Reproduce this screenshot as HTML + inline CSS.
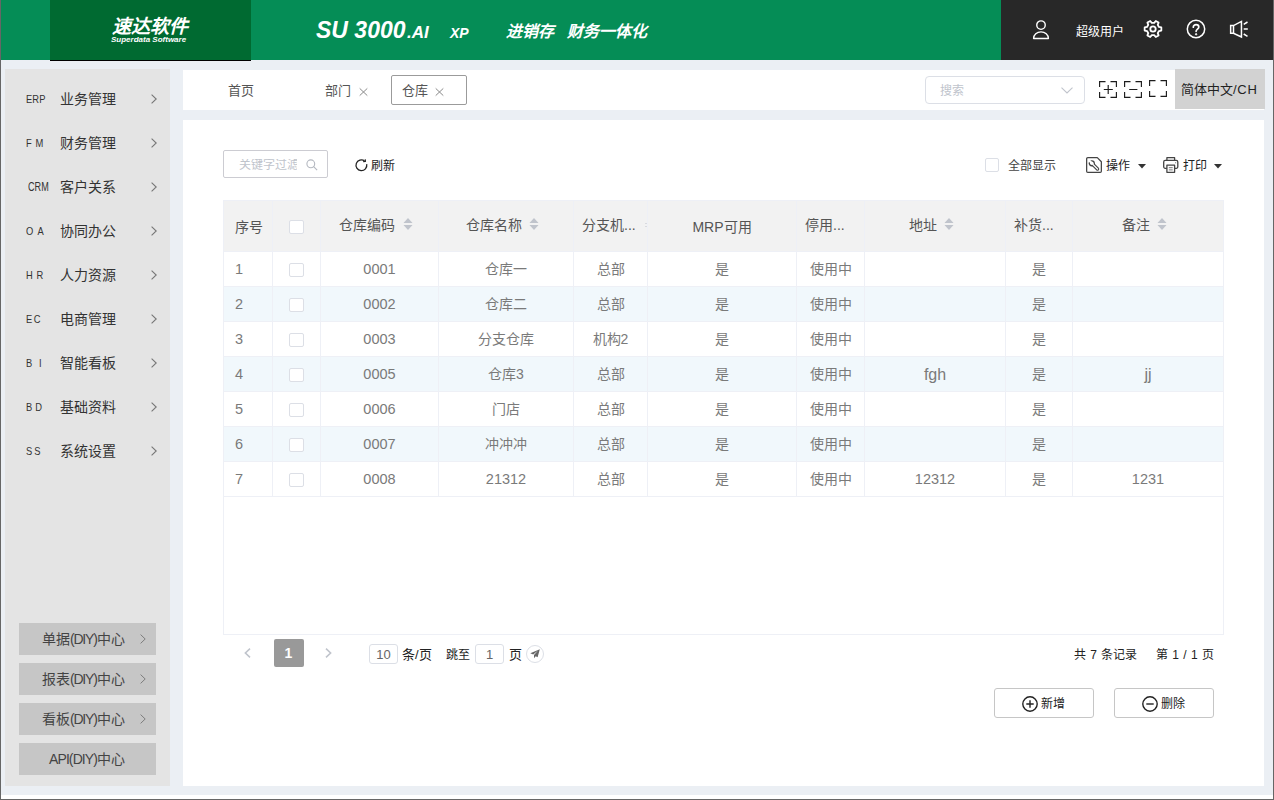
<!DOCTYPE html>
<html lang="zh-CN">
<head>
<meta charset="utf-8">
<title>SU 3000.AI</title>
<style>
*{box-sizing:border-box;margin:0;padding:0}
html,body{width:1274px;height:800px;overflow:hidden;background:#fff}
body{position:relative;font-family:"Liberation Sans",sans-serif;font-size:14px;color:#333}
.abs{position:absolute}
.t{position:absolute;white-space:nowrap;line-height:1}
svg{position:absolute;overflow:visible}
/* frame */
#bg{left:1px;top:0;width:1272px;height:795px;background:#ebeff4}
#edgeL{left:0;top:0;width:1px;height:800px;background:#666}
#edgeR{left:1273px;top:0;width:1px;height:800px;background:#666}
#edgeB{left:0;top:799px;width:1274px;height:1px;background:#666}
/* header */
#hdr{left:1px;top:0;width:1000px;height:60px;background:#058d56}
#logo{left:50px;top:0;width:201px;height:61px;background:#006a31;border-bottom:1px solid #000}
#userbar{left:1001px;top:0;width:272px;height:60px;background:#282828}
.hw{color:#fff;font-weight:bold;font-style:italic}
/* sidebar */
#side{left:5px;top:69px;width:165px;height:717px;background:#e4e4e4}
.mi{position:absolute;left:0;width:165px;height:44px}
.mi .k{position:absolute;left:21px;top:16px;transform-origin:0 0;transform:scaleX(.85);font-size:11px;line-height:12px;color:#333;white-space:nowrap}
.mi .n{position:absolute;left:54.500px;top:14px;font-size:14px;line-height:16px;color:#333;white-space:nowrap}
.mi svg{left:146px;top:17px}
.diy{position:absolute;left:14px;width:137px;height:32px;background:#c6c6c6;color:#444;font-size:14px;line-height:32px;white-space:nowrap}
.lt{font-style:normal;letter-spacing:-1.200px}
.diy span{position:absolute;left:0;top:0;height:32px}
/* tabs */
#tabs{left:183px;top:70px;width:1081px;height:40px;background:#fff}
#panel{left:183px;top:120px;width:1081px;height:666px;background:#fff}
/* table */
#tbl{left:223px;top:200px;width:1001px;height:435px;border:1px solid #eef0f6;background:#fff}
#thead{left:0;top:0;width:998px;height:50px;background:#f2f2f2}
.row{position:absolute;left:0;width:998px;height:35px;border-top:1px solid #eef0f6}
.row.alt{background:#f1f8fc}
.vl{position:absolute;top:0;width:1px;height:296px;background:#eef0f6}
.c{position:absolute;top:0;height:35px;line-height:35px;text-align:center;font-size:14px;color:#7a7a7a;white-space:nowrap;overflow:hidden}
.h{position:absolute;top:-1px;height:50px;line-height:50px;text-align:center;font-size:14px;color:#555;white-space:nowrap;overflow:hidden}
.c.n{font-size:14.500px}
.cb{position:absolute;width:14.500px;height:14px;border:1px solid #dcdfe6;border-radius:2px;background:#fff}
</style>
</head>
<body>
<div id="bg" class="abs"></div>
<div id="hdr" class="abs"></div>
<div id="logo" class="abs"></div>
<div id="userbar" class="abs"></div>
<div class="t hw" id="lg1" style="left:112px;top:17px;font-size:19px;line-height:19px">速达软件</div>
<div class="t hw" id="lg2" style="left:111px;top:35px;font-size:16px;line-height:18px;transform:scale(.5);transform-origin:0 0">Superdata Software</div>
<div class="t hw" id="ti1" style="left:316px;top:16px;font-size:23px;line-height:28px">SU 3000</div>
<div class="t hw" id="ti2" style="left:407px;top:21.500px;font-size:17px;line-height:22px">.AI</div>
<div class="t hw" id="ti3" style="left:450px;top:24px;font-size:14px;line-height:18px">XP</div>
<div class="t hw" id="ti4" style="left:506px;top:22px;font-size:16px;line-height:20px">进销存</div>
<div class="t hw" id="ti5" style="left:567px;top:22px;font-size:16px;line-height:20px">财务一体化</div>
<!-- user icon -->
<svg style="left:1032px;top:20px" width="18" height="20" viewBox="0 0 18 20" fill="none" stroke="#fff" stroke-width="1.400"><circle cx="9" cy="5.100" r="4.250"/><path d="M1.600 18.500A7.400 6.600 0 0 1 16.400 18.500z" stroke-linejoin="round"/></svg>
<div class="t" id="un" style="left:1076px;top:25px;font-size:12px;line-height:14px;color:#fff">超级用户</div>
<!-- gear -->
<svg style="left:1143.200px;top:19.100px" width="20" height="20" viewBox="0 0 20 20" fill="none" stroke="#fff" stroke-width="1.800" stroke-linejoin="round"><path d="M15.96 7.95 L18.34 8.38 L18.34 11.62 L15.96 12.05 L14.75 14.13 L15.58 16.42 L12.77 18.04 L11.20 16.18 L8.80 16.18 L7.23 18.04 L4.42 16.42 L5.25 14.13 L4.04 12.05 L1.66 11.62 L1.66 8.38 L4.04 7.95 L5.25 5.87 L4.42 3.58 L7.23 1.96 L8.80 3.82 L11.20 3.82 L12.77 1.96 L15.58 3.58 L14.75 5.87z"/><circle cx="10" cy="10" r="2.700"/></svg>
<!-- help -->
<svg style="left:1186px;top:19.100px" width="20" height="20" viewBox="0 0 20 20" fill="none" stroke="#fff" stroke-width="1.500"><circle cx="10" cy="10" r="8.700"/><path d="M7.300 8.200c0-1.600 1.200-2.600 2.800-2.600s2.700 1 2.700 2.400c0 2-2.700 2.200-2.700 4.300" stroke-linecap="round" stroke-width="1.700"/><circle cx="10.100" cy="15.300" r=".7" fill="#fff" stroke-width="1"/></svg>
<!-- speaker -->
<svg style="left:1229px;top:20px" width="20" height="19" viewBox="0 0 20 19" fill="none" stroke="#fff" stroke-width="1.500"><path d="M1.650 5.550H4.500L12.450 1.450V17.050L4.500 13.250H1.650z" stroke-linejoin="miter"/><path d="M4.500 5.550V13.250"/><path d="M14.700 4.300L18.500 2M14.700 8.900H18.800M14.700 14L18.500 16.300"/></svg>
<div id="side" class="abs">
<div class="mi" style="top:8px"><span class="k" style="letter-spacing:0.1px">ERP</span><span class="n">业务管理</span><svg width="6" height="10" viewBox="0 0 6 10" fill="none" stroke="#777" stroke-width="1.100"><path d="M.6.600l4.600 4.400L.6 9.400"/></svg></div>
<div class="mi" style="top:52px"><span class="k" style="letter-spacing:4.5px">FM</span><span class="n">财务管理</span><svg width="6" height="10" viewBox="0 0 6 10" fill="none" stroke="#777" stroke-width="1.100"><path d="M.6.600l4.600 4.400L.6 9.400"/></svg></div>
<div class="mi" style="top:96px"><span class="k" style="left:23px;top:15px;font-size:13px;line-height:14px;transform:scaleX(.700)">CRM</span><span class="n">客户关系</span><svg width="6" height="10" viewBox="0 0 6 10" fill="none" stroke="#777" stroke-width="1.100"><path d="M.6.600l4.600 4.400L.6 9.400"/></svg></div>
<div class="mi" style="top:140px"><span class="k" style="letter-spacing:4.9px">OA</span><span class="n">协同办公</span><svg width="6" height="10" viewBox="0 0 6 10" fill="none" stroke="#777" stroke-width="1.100"><path d="M.6.600l4.600 4.400L.6 9.400"/></svg></div>
<div class="mi" style="top:184px"><span class="k" style="letter-spacing:4.5px">HR</span><span class="n">人力资源</span><svg width="6" height="10" viewBox="0 0 6 10" fill="none" stroke="#777" stroke-width="1.100"><path d="M.6.600l4.600 4.400L.6 9.400"/></svg></div>
<div class="mi" style="top:228px"><span class="k" style="letter-spacing:1.8px">EC</span><span class="n">电商管理</span><svg width="6" height="10" viewBox="0 0 6 10" fill="none" stroke="#777" stroke-width="1.100"><path d="M.6.600l4.600 4.400L.6 9.400"/></svg></div>
<div class="mi" style="top:272px"><span class="k" style="letter-spacing:7.9px">BI</span><span class="n">智能看板</span><svg width="6" height="10" viewBox="0 0 6 10" fill="none" stroke="#777" stroke-width="1.100"><path d="M.6.600l4.600 4.400L.6 9.400"/></svg></div>
<div class="mi" style="top:316px"><span class="k" style="letter-spacing:3.5px">BD</span><span class="n">基础资料</span><svg width="6" height="10" viewBox="0 0 6 10" fill="none" stroke="#777" stroke-width="1.100"><path d="M.6.600l4.600 4.400L.6 9.400"/></svg></div>
<div class="mi" style="top:360px"><span class="k" style="letter-spacing:2.3px">SS</span><span class="n">系统设置</span><svg width="6" height="10" viewBox="0 0 6 10" fill="none" stroke="#777" stroke-width="1.100"><path d="M.6.600l4.600 4.400L.6 9.400"/></svg></div>
<div class="diy" style="top:554px"><span style="left:23px">单据<i class="lt">(DIY)</i>中心</span><svg style="left:121px;top:11px" width="6" height="10" viewBox="0 0 6 10" fill="none" stroke="#7d7d7d" stroke-width="1"><path d="M.6.600l4.600 4.400L.6 9.400"/></svg></div>
<div class="diy" style="top:594px"><span style="left:23px">报表<i class="lt">(DIY)</i>中心</span><svg style="left:121px;top:11px" width="6" height="10" viewBox="0 0 6 10" fill="none" stroke="#7d7d7d" stroke-width="1"><path d="M.6.600l4.600 4.400L.6 9.400"/></svg></div>
<div class="diy" style="top:634px"><span style="left:23px">看板<i class="lt">(DIY)</i>中心</span><svg style="left:121px;top:11px" width="6" height="10" viewBox="0 0 6 10" fill="none" stroke="#7d7d7d" stroke-width="1"><path d="M.6.600l4.600 4.400L.6 9.400"/></svg></div>
<div class="diy" style="top:674px"><span style="left:30px"><i class="lt" style="letter-spacing:-.9px">API(DIY)</i>中心</span></div>
</div>
<div id="tabs" class="abs"></div>
<div class="t" id="tb1" style="left:228px;top:84px;font-size:13px;line-height:14px;color:#555">首页</div>
<div class="t" id="tb2" style="left:325px;top:84px;font-size:13px;line-height:14px;color:#555">部门</div>
<svg style="left:359px;top:88px" width="9" height="8" viewBox="0 0 9 8" stroke="#8a8a8a" stroke-width="1" fill="none"><path d="M.700.400l7.600 7.200M8.300.400L.7 7.600"/></svg>
<div class="abs" id="tbact" style="left:391px;top:75px;width:76px;height:30px;border:1px solid #9b9b9b;border-radius:2px;background:#fff"></div>
<div class="t" id="tb3" style="left:402px;top:84px;font-size:13px;line-height:14px;color:#555">仓库</div>
<svg style="left:435px;top:88px" width="9" height="8" viewBox="0 0 9 8" stroke="#8a8a8a" stroke-width="1" fill="none"><path d="M.700.400l7.600 7.200M8.300.400L.7 7.600"/></svg>
<div class="abs" id="srch" style="left:924.500px;top:76px;width:160px;height:28px;border:1px solid #dcdfe6;border-radius:4px;background:#fff"></div>
<div class="t" id="srcht" style="left:940px;top:85px;font-size:12px;line-height:13px;color:#c0c4cc">搜索</div>
<svg style="left:1061px;top:87px" width="12" height="7" viewBox="0 0 12 7" fill="none" stroke="#c0c4cc" stroke-width="1.100"><path d="M.5.600l5.500 5.400L11.500.6"/></svg>
<!-- zoom icons -->
<svg style="left:1099px;top:81px" width="18" height="17" viewBox="0 0 18 17" fill="none" stroke="#1c1c1c" stroke-width="1.150"><path d="M.600 6V.6H6.500M11.500.600H17.400V6M17.400 11V16.400H11.500M6.500 16.400H.6V11M4.800 8.500H13.800M9.200 4.100V12.900"/></svg>
<svg style="left:1124px;top:81px" width="18" height="17" viewBox="0 0 18 17" fill="none" stroke="#1c1c1c" stroke-width="1.150"><path d="M.600 6V.6H6.500M11.500.600H17.400V6M17.400 11V16.400H11.500M6.500 16.400H.6V11M5.200 8.500H13.400"/></svg>
<svg style="left:1149px;top:80px" width="18" height="17" viewBox="0 0 18 17" fill="none" stroke="#1c1c1c" stroke-width="1.150"><path d="M.600 6V.6H6.500M11.500.600H17.400V6M17.400 11V16.400H11.500M6.500 16.400H.6V11"/></svg>
<div class="abs" id="lang" style="left:1175px;top:69px;width:90px;height:40px;background:#d2d2d2"></div>
<div class="t" id="langt" style="left:1181px;top:82px;font-size:13px;line-height:15px;color:#222">简体中文<span style="letter-spacing:.7px">/CH</span></div>
<div id="panel" class="abs"></div>
<div class="abs" id="flt" style="left:223px;top:150px;width:104.500px;height:28px;border:1px solid #ccccd2;border-radius:2px;background:#fff"></div>
<div class="t" id="fltt" style="left:239px;top:159px;width:58px;overflow:hidden;font-size:12px;line-height:13px;color:#c0c4cc">关键字过滤</div>
<svg style="left:306px;top:159px" width="12" height="12" viewBox="0 0 12 12" fill="none" stroke="#b4b8c0" stroke-width="1.100"><circle cx="4.800" cy="4.800" r="3.900"/><path d="M7.700 7.700l3.400 3.400"/></svg>
<!-- refresh -->
<svg style="left:355px;top:159px" width="14" height="14" viewBox="0 0 14 14" fill="none" stroke="#222" stroke-width="1.300"><path d="M9.600 1.900A5.400 5.400 0 1 0 11.700 5.200"/><path d="M8.200 2.600l2.300-.2-.3-2.200" stroke-linejoin="round" stroke-width="1.100"/></svg>
<div class="t" id="rft" style="left:371px;top:159px;font-size:12px;line-height:14px;color:#222">刷新</div>
<div class="cb" style="left:984.500px;top:158px"></div>
<div class="t" id="alls" style="left:1008px;top:159px;font-size:12px;line-height:14px;color:#444">全部显示</div>
<!-- tool -->
<svg style="left:1086.400px;top:157px" width="16" height="16" viewBox="0 0 16 16" fill="none" stroke="#444" stroke-width="1.250" stroke-linejoin="round"><path d="M1.800.650H11.300L15.350 4.700V14.200a1.150 1.150 0 0 1-1.150 1.150H1.800A1.150 1.150 0 0 1 .65 14.200V1.800A1.150 1.150 0 0 1 1.800.650z"/><path d="M7 7.500L11.500 12" stroke-width="3.500" stroke-linecap="round"/><circle cx="5.800" cy="6.300" r="3.100" fill="#444" stroke="none"/><path d="M7 7.500L11.500 12" stroke="#fff" stroke-width="1.300" stroke-linecap="round"/><circle cx="5.800" cy="6.300" r="1.800" fill="#fff" stroke="none"/><path d="M5.600 6.100L2.600 3.100" stroke="#fff" stroke-width="2.100"/></svg>
<div class="t" id="opt" style="left:1106px;top:159px;font-size:12px;line-height:14px;color:#222">操作</div>
<svg style="left:1138px;top:164px" width="8" height="5" viewBox="0 0 8 5"><path d="M0 0h8L4 4.500z" fill="#333"/></svg>
<!-- print -->
<svg style="left:1162.800px;top:157.200px" width="16" height="16" viewBox="0 0 16 16" fill="none" stroke="#444" stroke-width="1.300" stroke-linejoin="round"><path d="M3.900 3.400V.7H11.600V3.400"/><path d="M3.900 11.300H2.200a1.500 1.500 0 0 1-1.500-1.500V4.900a1.500 1.500 0 0 1 1.500-1.500H13.300a1.500 1.500 0 0 1 1.500 1.500V9.800a1.500 1.500 0 0 1-1.500 1.500H11.600"/><path d="M3.900 8.200H11.600V15.300H3.900z"/><path d="M5.800 10.700H9.700M5.800 12.900H9.700" stroke-width="1" stroke="#777"/><circle cx="12.700" cy="5.700" r=".5" fill="#444" stroke="none"/></svg>
<div class="t" id="prt" style="left:1182.500px;top:159px;font-size:12px;line-height:14px;color:#222">打印</div>
<svg style="left:1214px;top:164px" width="8" height="5" viewBox="0 0 8 5"><path d="M0 0h8L4 4.500z" fill="#333"/></svg>
<div id="tbl" class="abs">
<div id="thead" class="abs" style="width:999px"></div>
<div class="h" style="left:0px;width:48px;text-align:left;padding-left:11px;padding-top:2px">序号</div>
<div class="cb" style="left:65px;top:19px"></div>
<div class="h" style="left:97px;width:117px;padding-right:7px">仓库编码<svg class="st" width="10" height="12" viewBox="0 0 10 12" style="position:relative;display:inline-block;vertical-align:middle;margin-left:7.500px;top:-2px"><path d="M5 0l4.500 5h-9z" fill="#c0c4cc"/><path d="M5 12l4.500-5h-9z" fill="#c0c4cc"/></svg></div>
<div class="h" style="left:215px;width:134px;padding-right:7px">仓库名称<svg class="st" width="10" height="12" viewBox="0 0 10 12" style="position:relative;display:inline-block;vertical-align:middle;margin-left:7.500px;top:-2px"><path d="M5 0l4.500 5h-9z" fill="#c0c4cc"/><path d="M5 12l4.500-5h-9z" fill="#c0c4cc"/></svg></div>
<div class="h" style="left:350px;width:73px;text-align:left;padding-left:8px">分支机...</div>
<div class="h" style="left:424px;width:148px;padding-top:1.500px">MRP可用</div>
<div class="h" style="left:573px;width:67px;text-align:left;padding-left:8px">停用...</div>
<div class="h" style="left:641px;width:140px;padding-right:7px">地址<svg class="st" width="10" height="12" viewBox="0 0 10 12" style="position:relative;display:inline-block;vertical-align:middle;margin-left:7.500px;top:-2px"><path d="M5 0l4.500 5h-9z" fill="#c0c4cc"/><path d="M5 12l4.500-5h-9z" fill="#c0c4cc"/></svg></div>
<div class="h" style="left:782px;width:66px;text-align:left;padding-left:8px">补货...</div>
<div class="h" style="left:849px;width:150px;padding-right:7px">备注<svg class="st" width="10" height="12" viewBox="0 0 10 12" style="position:relative;display:inline-block;vertical-align:middle;margin-left:7.500px;top:-2px"><path d="M5 0l4.500 5h-9z" fill="#c0c4cc"/><path d="M5 12l4.500-5h-9z" fill="#c0c4cc"/></svg></div>
<div class="row" style="top:50px;width:999px"><div class="c n" style="left:0px;width:48px;text-align:left;padding-left:11px">1</div><div class="cb" style="left:65px;top:11px"></div><div class="c n" style="left:97px;width:117px">0001</div><div class="c" style="left:215px;width:134px">仓库一</div><div class="c" style="left:350px;width:73px">总部</div><div class="c" style="left:424px;width:148px">是</div><div class="c" style="left:573px;width:67px">使用中</div><div class="c" style="left:782px;width:66px">是</div></div>
<div class="row alt" style="top:85px;width:999px"><div class="c n" style="left:0px;width:48px;text-align:left;padding-left:11px">2</div><div class="cb" style="left:65px;top:11px"></div><div class="c n" style="left:97px;width:117px">0002</div><div class="c" style="left:215px;width:134px">仓库二</div><div class="c" style="left:350px;width:73px">总部</div><div class="c" style="left:424px;width:148px">是</div><div class="c" style="left:573px;width:67px">使用中</div><div class="c" style="left:782px;width:66px">是</div></div>
<div class="row" style="top:120px;width:999px"><div class="c n" style="left:0px;width:48px;text-align:left;padding-left:11px">3</div><div class="cb" style="left:65px;top:11px"></div><div class="c n" style="left:97px;width:117px">0003</div><div class="c" style="left:215px;width:134px">分支仓库</div><div class="c" style="left:350px;width:73px">机构2</div><div class="c" style="left:424px;width:148px">是</div><div class="c" style="left:573px;width:67px">使用中</div><div class="c" style="left:782px;width:66px">是</div></div>
<div class="row alt" style="top:155px;width:999px"><div class="c n" style="left:0px;width:48px;text-align:left;padding-left:11px">4</div><div class="cb" style="left:65px;top:11px"></div><div class="c n" style="left:97px;width:117px">0005</div><div class="c" style="left:215px;width:134px">仓库3</div><div class="c" style="left:350px;width:73px">总部</div><div class="c" style="left:424px;width:148px">是</div><div class="c" style="left:573px;width:67px">使用中</div><div class="c" style="left:641px;width:140px;font-size:16px">fgh</div><div class="c" style="left:782px;width:66px">是</div><div class="c" style="left:849px;width:150px;font-size:16px">jj</div></div>
<div class="row" style="top:190px;width:999px"><div class="c n" style="left:0px;width:48px;text-align:left;padding-left:11px">5</div><div class="cb" style="left:65px;top:11px"></div><div class="c n" style="left:97px;width:117px">0006</div><div class="c" style="left:215px;width:134px">门店</div><div class="c" style="left:350px;width:73px">总部</div><div class="c" style="left:424px;width:148px">是</div><div class="c" style="left:573px;width:67px">使用中</div><div class="c" style="left:782px;width:66px">是</div></div>
<div class="row alt" style="top:225px;width:999px"><div class="c n" style="left:0px;width:48px;text-align:left;padding-left:11px">6</div><div class="cb" style="left:65px;top:11px"></div><div class="c n" style="left:97px;width:117px">0007</div><div class="c" style="left:215px;width:134px">冲冲冲</div><div class="c" style="left:350px;width:73px">总部</div><div class="c" style="left:424px;width:148px">是</div><div class="c" style="left:573px;width:67px">使用中</div><div class="c" style="left:782px;width:66px">是</div></div>
<div class="row" style="top:260px;width:999px"><div class="c n" style="left:0px;width:48px;text-align:left;padding-left:11px">7</div><div class="cb" style="left:65px;top:11px"></div><div class="c n" style="left:97px;width:117px">0008</div><div class="c n" style="left:215px;width:134px">21312</div><div class="c" style="left:350px;width:73px">总部</div><div class="c" style="left:424px;width:148px">是</div><div class="c" style="left:573px;width:67px">使用中</div><div class="c n" style="left:641px;width:140px">12312</div><div class="c" style="left:782px;width:66px">是</div><div class="c n" style="left:849px;width:150px">1231</div></div>
<div class="abs" style="left:421px;top:22px;width:1.500px;height:1px;background:#d8dadf"></div><div class="abs" style="left:421px;top:25px;width:1.500px;height:1px;background:#d8dadf"></div>
<div class="abs" style="left:0;top:295px;width:999px;height:1px;background:#eef0f6"></div>
<div class="vl" style="left:48px"></div>
<div class="vl" style="left:96px"></div>
<div class="vl" style="left:214px"></div>
<div class="vl" style="left:349px"></div>
<div class="vl" style="left:423px"></div>
<div class="vl" style="left:572px"></div>
<div class="vl" style="left:640px"></div>
<div class="vl" style="left:781px"></div>
<div class="vl" style="left:848px"></div>
</div>
<svg style="left:244px;top:648px" width="7" height="10" viewBox="0 0 7 10" fill="none" stroke="#c0c4cc" stroke-width="1.600"><path d="M6 .700L1.400 5 6 9.300"/></svg>
<div class="abs" id="pg1" style="left:273.500px;top:639px;width:30px;height:28px;background:#999;border-radius:2px;color:#fff;font-weight:bold;font-size:14px;line-height:28px;text-align:center">1</div>
<svg style="left:325px;top:648px" width="7" height="10" viewBox="0 0 7 10" fill="none" stroke="#c0c4cc" stroke-width="1.600"><path d="M1 .700L5.600 5 1 9.300"/></svg>
<div class="abs" id="ps" style="left:369px;top:644px;width:29px;height:20px;border:1px solid #dcdfe6;border-radius:3px;background:#fff;font-size:13px;line-height:19px;text-align:center;color:#666">10</div>
<div class="t" id="pst" style="left:402px;top:648px;font-size:13px;line-height:14px;color:#222">条/页</div>
<div class="t" id="jt" style="left:446px;top:648px;font-size:12px;line-height:14px;color:#222">跳至</div>
<div class="abs" id="jp" style="left:475px;top:644px;width:29px;height:20px;border:1px solid #dcdfe6;border-radius:3px;background:#fff;font-size:13px;line-height:19px;text-align:center;color:#666">1</div>
<div class="t" id="jy" style="left:509px;top:648px;font-size:13px;line-height:14px;color:#222">页</div>
<div class="abs" id="go" style="left:526px;top:645px;width:18px;height:18px;border:1px solid #dcdfe6;border-radius:50%;background:#fff"></div>
<svg style="left:530px;top:649px" width="10" height="10" viewBox="0 0 10 10"><path d="M9.800.200L.3 4.200l2.900 1.200L8 1.600 4 6v3.300l1.700-2 1.900.9z" fill="#666"/></svg>
<div class="t" id="tot" style="word-spacing:.8px;left:1074px;top:648px;font-size:12px;line-height:14px;color:#222">共 7 条记录</div>
<div class="t" id="pgn" style="word-spacing:1px;left:1156px;top:648px;font-size:12px;line-height:14px;color:#222">第 1 / 1 页</div>
<div class="abs" id="bn1" style="left:994px;top:688px;width:100px;height:30px;border:1px solid #c6c6c6;border-radius:3px;background:#fff"></div>
<svg style="left:1022px;top:696px" width="16" height="16" viewBox="0 0 16 16" fill="none" stroke="#222" stroke-width="1.400"><circle cx="8" cy="8" r="7.200"/><path d="M4.300 8h7.400M8 4.300v7.400"/></svg>
<div class="t" id="bn1t" style="left:1041px;top:697px;font-size:12px;line-height:14px;color:#222">新增</div>
<div class="abs" id="bn2" style="left:1114px;top:688px;width:100px;height:30px;border:1px solid #c6c6c6;border-radius:3px;background:#fff"></div>
<svg style="left:1142px;top:696px" width="16" height="16" viewBox="0 0 16 16" fill="none" stroke="#222" stroke-width="1.400"><circle cx="8" cy="8" r="7.200"/><path d="M4.300 8h7.400"/></svg>
<div class="t" id="bn2t" style="left:1161px;top:697px;font-size:12px;line-height:14px;color:#222">删除</div>
<div id="edgeL" class="abs"></div>
<div id="edgeR" class="abs"></div>
<div id="edgeB" class="abs"></div>
</body>
</html>
